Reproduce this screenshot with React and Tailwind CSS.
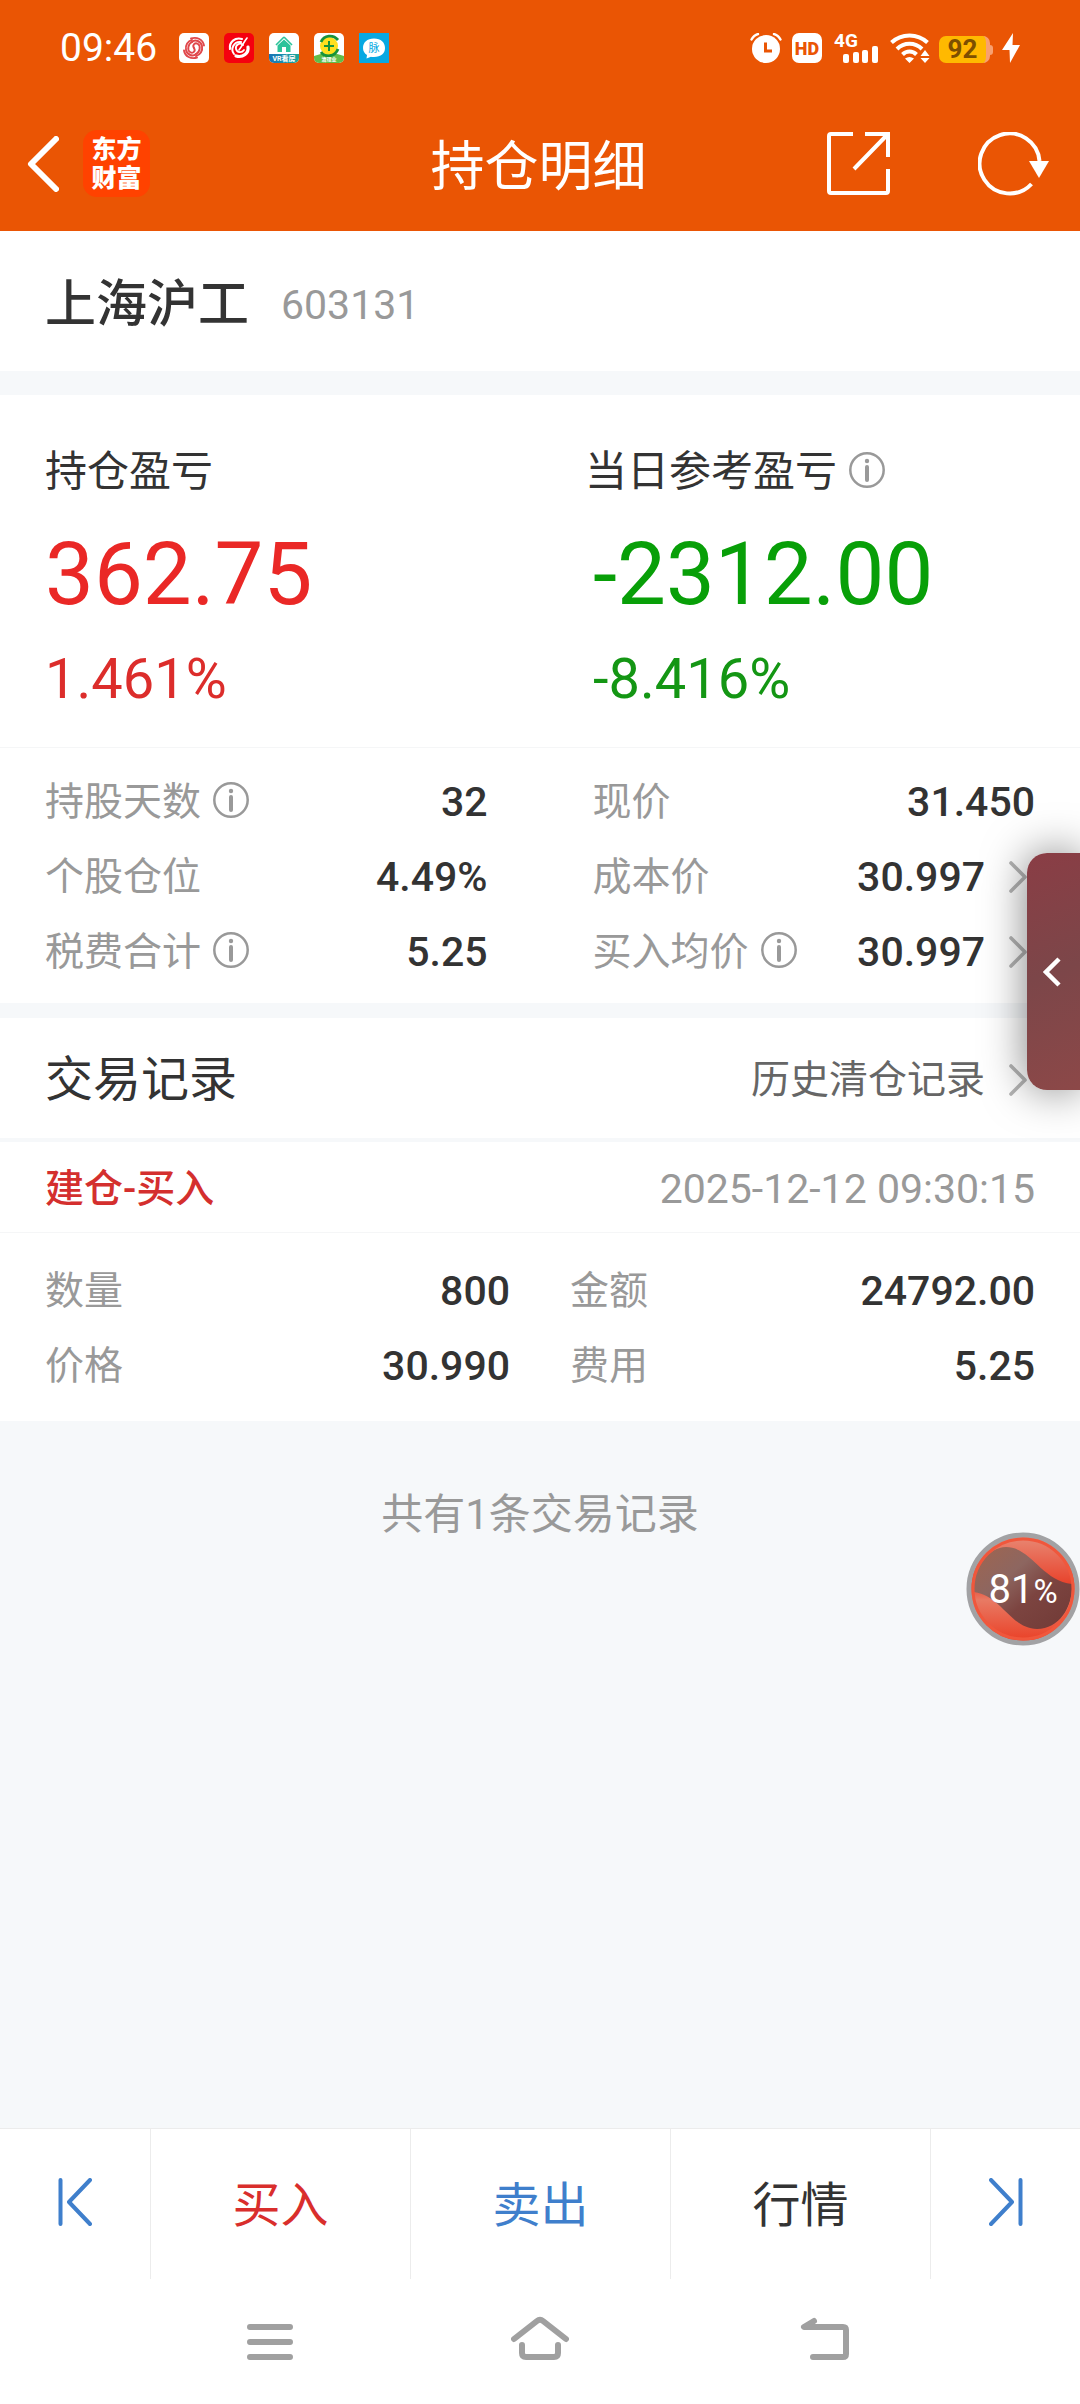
import React from "react";

const stats = [
  [
    { label: "持股天数", value: "32", info: true },
    { label: "个股仓位", value: "4.49%" },
    { label: "税费合计", value: "5.25", info: true },
  ],
  [
    { label: "现价", value: "31.450" },
    { label: "成本价", value: "30.997", more: true },
    { label: "买入均价", value: "30.997", info: true, more: true },
  ],
];

const record = [
  [
    { label: "数量", value: "800" },
    { label: "价格", value: "30.990" },
  ],
  [
    { label: "金额", value: "24792.00" },
    { label: "费用", value: "5.25" },
  ],
];

const InfoButton = ({ label }) => (
  <button type="button" aria-label={label} className="mb-1 shrink-0">
    <svg width="36" height="36" viewBox="0 0 36 36" fill="none" stroke="#999999">
      <circle cx="18" cy="18" r="16.7" strokeWidth="2.5" />
      <path d="M18 15v13" strokeWidth="4" strokeLinecap="round" />
      <circle cx="18" cy="9" r="2.2" fill="#999999" stroke="none" />
    </svg>
  </button>
);

const ChevronRight = () => (
  <svg width="18" height="34" viewBox="0 0 18 34" fill="none" stroke="#b4b4b4" strokeWidth="3.6" strokeLinecap="round" strokeLinejoin="round" className="mr-2 ml-6 shrink-0">
    <path d="M2 3l14 14L2 31" />
  </svg>
);

const StatRow = ({ label, value, info, more }) => (
  <div className="flex h-[75px] items-center">
    <dt className="flex items-center gap-3 text-[39px] leading-[48px] text-[#999999]">
      {label}
      {info && <InfoButton label={label + "说明"} />}
    </dt>
    <dd className="ml-auto flex items-center text-[41px] leading-[48px] font-medium text-[#333333]">
      {value}
      {more && <ChevronRight />}
    </dd>
  </div>
);

// small launcher icons of the running apps
const NotificationIcons = () => (
  <div className="flex gap-[15px]">
    <svg width="30" height="30" viewBox="0 0 30 30">
      <rect width="30" height="30" rx="5" fill="#fff" />
      <g fill="none" stroke="#e0484c" strokeWidth="1.9" strokeLinecap="round">
        <path d="M15 15c-2-3 1-6 4-4s2 8-2 10" />
        <path d="M15 15c2 3-1 6-4 4s-2-8 2-10" />
        <path d="M13 9c3-3 9-1 10 4s-2 9-6 10" />
        <path d="M17 21c-3 3-9 1-10-4s2-9 6-10" />
        <path d="M12 5.500c6-2 12 1 13 7M18 24.500c-6 2-12-1-13-7" />
      </g>
    </svg>
    <svg width="30" height="30" viewBox="0 0 30 30">
      <rect width="30" height="30" rx="5" fill="#f5000f" />
      <g fill="none" stroke="#fff" strokeLinecap="round">
        <path d="M18 6C11 4 5 9 6 16" strokeWidth="2.2" />
        <path d="M10 21c-4-5 0-13 7-12" strokeWidth="2" />
        <path d="M19 12c-3-3-8 0-7 4s6 4 8 1" strokeWidth="1.8" />
        <path d="M23 5c-3 4-5 8-8 12" strokeWidth="1.6" />
        <path d="M24 14c1 6-5 11-12 9" strokeWidth="3.2" />
      </g>
    </svg>
    <svg width="30" height="30" viewBox="0 0 30 30">
      <defs>
        <linearGradient id="house" x1="0" x2="1">
          <stop offset="0" stopColor="#1774b8" />
          <stop offset="1" stopColor="#20a99a" />
        </linearGradient>
      </defs>
      <rect width="30" height="30" rx="5" fill="#fff" />
      <path d="M15 4L7 12M15 4l8 8" stroke="#2cc39a" strokeWidth="1.6" />
      <path d="M15 6.500l6.500 6V19H17v-5h-4v5H8.500v-6.500z" fill="#2cc39a" />
      <path d="M0 21h30v4a5 5 0 0 1-5 5H5a5 5 0 0 1-5-5z" fill="url(#house)" />
      <text x="15" y="28" textAnchor="middle" fontSize="7" fontWeight="bold" fill="#fff">VR看房</text>
    </svg>
    <svg width="30" height="30" viewBox="0 0 30 30">
      <rect width="30" height="30" rx="5" fill="#fff" />
      <path d="M0 23q15-6 30 0v2a5 5 0 0 1-5 5H5a5 5 0 0 1-5-5z" fill="#62bd4a" />
      <circle cx="15" cy="13" r="9" fill="#ffe01e" />
      <path d="M7 9c3-7 12-8 17-2" fill="none" stroke="#17933b" strokeWidth="2.8" />
      <path d="M7 19c4 6 14 5 17-3" fill="none" stroke="#17933b" strokeWidth="2.8" />
      <path d="M15 8v10M10 13h10" stroke="#17933b" strokeWidth="2" />
      <text x="15" y="28" textAnchor="middle" fontSize="5" fontWeight="bold" fill="#fff">清理业</text>
    </svg>
    <svg width="30" height="30" viewBox="0 0 30 30">
      <rect width="30" height="30" fill="#07a8e2" />
      <path d="M15 5.500c7 0 11 4 11 9.500s-4 9-11 9c-1.500 0-2 0-3-.300L7.500 25.500l.500-3.500C5.500 20.500 4 18 4 15c0-5.500 4-9.500 11-9.500z" fill="#fff" />
      <text x="15" y="19" textAnchor="middle" fontSize="11" fill="#07a8e2">脉</text>
    </svg>
  </div>
);

const SystemIcons = () => (
  <div className="flex items-center text-white">
    <svg width="32" height="30" viewBox="0 0 32 30" className="mr-[10px]">
      <circle cx="16" cy="16" r="14" fill="#fff" />
      <path d="M1.500 6.500C3 3.500 5 1.800 8 1M30.500 6.500C29 3.500 27 1.800 24 1" fill="none" stroke="#fff" strokeWidth="2.4" strokeLinecap="round" />
      <path d="M15.500 9.500V18H22" fill="none" stroke="#ea5504" strokeWidth="3" />
    </svg>
    <svg width="30" height="30" viewBox="0 0 30 30" className="mr-3">
      <rect width="30" height="30" rx="7" fill="#fff" />
      <text x="15" y="22" textAnchor="middle" fontSize="18" fontWeight="900" fill="#ea5504">HD</text>
    </svg>
    <svg width="44" height="36" viewBox="0 -6 44 36" className="mr-[12px] mb-[6px] overflow-visible">
      <text x="0" y="14" fontSize="19" fontWeight="bold" fill="#fff">4G</text>
      <g fill="#fff">
        <rect x="9" y="21" width="6" height="9" rx="2" />
        <rect x="19" y="19" width="6" height="11" rx="2" />
        <rect x="28" y="17" width="6" height="13" rx="2" />
        <rect x="38" y="13" width="6" height="17" rx="2" />
      </g>
    </svg>
    <svg width="40" height="30" viewBox="0 0 40 30" className="mr-[9px]">
      <g fill="none" stroke="#fff" strokeWidth="4">
        <path d="M1.500 9.500c10-9.500 26-9.500 36 0" />
        <path d="M7 16c7-7 18-7 25 0" />
        <path d="M12.500 21.500c4-4 10-4 14 0" />
      </g>
      <path d="M19.500 30l-4.500-4.500q4.500-3 9 0zM35 17l4.500 6h-9zM35 30l-4.500-5h9z" fill="#fff" />
    </svg>
    <div className="mt-[3px] flex h-[27px] w-[51px] items-center justify-center rounded-[7px] border-r-4 border-[#f8a070] bg-[#ffb900] text-[26px] leading-[27px] font-bold text-[#7d4f00]">92</div>
    <div className="mt-[3px] mr-[9px] h-[10px] w-[3px] rounded-r-sm bg-[#f8a070]" />
    <svg width="18" height="30" viewBox="0 0 18 30" fill="#fff">
      <path d="M11 0L0 17h7.500L8 30 18 12h-7.500z" />
    </svg>
  </div>
);

const Header = () => (
  <header className="bg-[#ea5504] text-white">
    <div className="flex h-24 items-center justify-between pr-[60px] pl-[60px]">
      <div className="flex items-center gap-[22px]">
        <span className="text-[39px] leading-[48px]">09:46</span>
        <NotificationIcons />
      </div>
      <SystemIcons />
    </div>
    <div className="grid h-[135px] grid-cols-[1fr_auto_1fr] items-center pr-[30px] pl-[27px]">
      <div className="flex items-center gap-6">
        <button type="button" aria-label="返回">
          <svg width="32" height="56" viewBox="0 0 32 56" fill="none" stroke="#fff" strokeWidth="6" strokeLinecap="round" strokeLinejoin="round">
            <path d="M29 3L4 28l25 25" />
          </svg>
        </button>
        <div className="flex size-[67px] items-center justify-center rounded-[14px] bg-[#ff4200] text-center text-[25px] leading-[29px] font-black">
          东方
          <br />
          财富
        </div>
      </div>
      <h1 className="pt-2 text-[54px] leading-[64px]">持仓明细</h1>
      <div className="flex items-center justify-end gap-[88px]">
        <button type="button" aria-label="分享">
          <svg width="63" height="63" viewBox="0 0 63 63" fill="none" stroke="#fff" strokeWidth="4">
            <path d="M26 2H4a2 2 0 0 0-2 2v55a2 2 0 0 0 2 2h55a2 2 0 0 0 2-2V37" />
            <path d="M38 2h23v23M60 3L27 37" />
          </svg>
        </button>
        <button type="button" aria-label="刷新">
          <svg width="72" height="64" viewBox="0 0 72 64" fill="none" stroke="#fff" strokeWidth="4">
            <path d="M53.500 52A30 30 0 1 1 61.500 29" />
            <path d="M51 29h20L61 46z" fill="#fff" stroke="none" />
          </svg>
        </button>
      </div>
    </div>
  </header>
);

const ProfitLoss = () => (
  <section className="grid grid-cols-2 gap-x-[90px] bg-white px-[45px] pt-[53px] pb-[36px]">
    <div>
      <h3 className="text-[42px] leading-[48px] text-[#333333]">持仓盈亏</h3>
      <p className="mt-[30px] text-[87px] leading-[96px] text-[#ea2826]">362.75</p>
      <p className="mt-[25px] text-[56px] leading-[64px] text-[#dc2d2b]">1.461%</p>
    </div>
    <div>
      <h3 className="flex items-center gap-3 text-[42px] leading-[48px] text-[#333333]">
        当日参考盈亏
        <InfoButton label="当日参考盈亏说明" />
      </h3>
      <p className="mt-[30px] pl-2 text-[87px] leading-[96px] text-[#089f08]">-2312.00</p>
      <p className="mt-[25px] pl-2 text-[56px] leading-[64px] text-[#149614]">-8.416%</p>
    </div>
  </section>
);

const SkipIcon = ({ flip }) => (
  <svg width="34" height="48" viewBox="0 0 34 48" fill="none" stroke="#3f7fcc" strokeWidth="4" strokeLinecap="round" strokeLinejoin="round" className={flip ? "-scale-x-100" : ""}>
    <path d="M2.500 2v44M32 2L11 24l21 22" />
  </svg>
);

const ActionBar = () => (
  <nav className="flex h-[151px] border-t border-[#ececec] bg-white text-[48px] leading-[56px]">
    <button type="button" aria-label="上一个" className="flex w-[150px] items-center justify-center pb-1">
      <SkipIcon />
    </button>
    <button type="button" className="flex-1 border-l border-[#ececec] pt-1 text-[#d92e2c]">买入</button>
    <button type="button" className="flex-1 border-l border-[#ececec] pt-1 text-[#3f7fcc]">卖出</button>
    <button type="button" className="flex-1 border-l border-[#ececec] pt-1 text-[#333333]">行情</button>
    <button type="button" aria-label="下一个" className="flex w-[150px] items-center justify-center border-l border-[#ececec] pb-1">
      <SkipIcon flip />
    </button>
  </nav>
);

const SystemNav = () => (
  <nav className="flex h-[125px] items-center justify-center bg-white pb-2">
    <button type="button" aria-label="最近任务" className="flex w-1/4 justify-center">
      <svg width="46" height="44" viewBox="0 0 46 44" stroke="#a0a0a0" strokeWidth="6" strokeLinecap="round">
        <path d="M3 11h40M3 26h40M3 41h40" />
      </svg>
    </button>
    <button type="button" aria-label="主屏幕" className="flex w-1/4 justify-center">
      <svg width="58" height="44" viewBox="0 0 58 44" fill="none" stroke="#a0a0a0" strokeWidth="6" strokeLinecap="round" strokeLinejoin="round">
        <path d="M3 23L26 5q3-2.500 6 0l23 18" />
        <path d="M11 29v8q0 4 4 4h28q4 0 4-4v-8" />
      </svg>
    </button>
    <button type="button" aria-label="后退" className="flex w-1/4 justify-center">
      <svg width="78" height="44" viewBox="-30 0 78 44" fill="none" stroke="#a0a0a0" strokeWidth="6" strokeLinecap="round" strokeLinejoin="round">
        <path d="M13 5L3 11h39q3 0 3 3v24q0 3-3 3H12" />
      </svg>
    </button>
  </nav>
);

const MemoryBall = () => (
  <button type="button" className="absolute top-[1532px] right-0 size-[114px] pt-1 text-white">
    <svg viewBox="0 0 114 114" className="absolute inset-0">
      <defs>
        <linearGradient id="shell" x1="0" y1="0" x2="0" y2="1">
          <stop offset="0" stopColor="#e88a76" />
          <stop offset="0.45" stopColor="#e8432c" />
          <stop offset="0.6" stopColor="#e87a64" />
          <stop offset="1" stopColor="#ea3e24" />
        </linearGradient>
        <linearGradient id="wave" x1="0" y1="0" x2="1" y2="1">
          <stop offset="0" stopColor="#a0654f" />
          <stop offset="0.35" stopColor="#8d6660" />
          <stop offset="0.6" stopColor="#7c4440" />
          <stop offset="1" stopColor="#703a36" />
        </linearGradient>
      </defs>
      <circle cx="57" cy="57" r="54" fill="url(#shell)" stroke="#a2a2a4" strokeWidth="5" />
      <path d="M8 60C6 38 22 15 40 15c25 0 35 33 66 37 1 22-12 45-35 45C45 97 36 64 8 60z" fill="url(#wave)" />
      <circle cx="57" cy="57" r="50" fill="none" stroke="#f0573c" strokeWidth="3" />
    </svg>
    <span className="relative text-[40px] leading-[48px]">81</span>
    <span className="relative text-[33px] leading-[48px]">%</span>
  </button>
);

const App = () => {
  return (
    <div className="relative flex min-h-screen flex-col overflow-hidden bg-[#f6f8fa] font-[Roboto,'Noto_Sans_CJK_SC',sans-serif]">
      <Header />

      <main className="flex-1">
        <section className="flex h-[140px] items-center gap-8 bg-white px-[45px] pt-2">
          <h2 className="text-[51px] leading-[64px] font-medium text-[#333333]">上海沪工</h2>
          <span className="text-[41px] leading-[64px] text-[#999999]">603131</span>
        </section>

        <div className="mt-6">
          <ProfitLoss />
        </div>

        <dl className="grid grid-cols-2 gap-x-[105px] border-t border-[#f5f6f7] bg-white px-[45px] pt-4 pb-[14px]">
          {stats.map((column, i) => (
            <div key={i}>
              {column.map((item) => (
                <StatRow key={item.label} {...item} />
              ))}
            </div>
          ))}
        </dl>

        <section className="mt-[15px]">
          <div className="flex h-[120px] items-center justify-between bg-white px-[45px] pt-1">
            <h2 className="text-[48px] leading-[56px] text-[#333333]">交易记录</h2>
            <a href="#history" className="flex items-center text-[39px] leading-[48px] text-[#666666]">
              历史清仓记录
              <ChevronRight />
            </a>
          </div>

          <article className="mt-1 bg-white">
            <div className="flex h-[90px] items-center justify-between px-[45px] pt-1">
              <h3 className="text-[39px] leading-[48px] font-medium text-[#d42f2e]">建仓-买入</h3>
              <time className="text-[41px] leading-[48px] text-[#999999]">2025-12-12 09:30:15</time>
            </div>
            <dl className="grid grid-cols-2 gap-x-[60px] border-t border-[#f5f6f7] px-[45px] pt-5 pb-[18px]">
              {record.map((column, i) => (
                <div key={i}>
                  {column.map((item) => (
                    <StatRow key={item.label} {...item} />
                  ))}
                </div>
              ))}
            </dl>
          </article>
        </section>

        <p className="pt-16 text-center text-[42px] leading-[60px] text-[#999999]">共有1条交易记录</p>
      </main>

      <ActionBar />
      <SystemNav />

      <button
        type="button"
        aria-label="展开侧栏"
        className="absolute top-[853px] right-0 flex h-[237px] w-[53px] items-center rounded-l-[20px] bg-linear-160 from-[#8a3d45] via-[#7c4649] to-[#8c4848] pl-4 shadow-[0_0_44px_rgba(0,0,0,0.5)]"
      >
        <svg width="18" height="30" viewBox="0 0 18 30" fill="none" stroke="#fff" strokeWidth="4.5">
          <path d="M16 2L3 15l13 13" />
        </svg>
      </button>
      <MemoryBall />
    </div>
  );
};

export default App;
